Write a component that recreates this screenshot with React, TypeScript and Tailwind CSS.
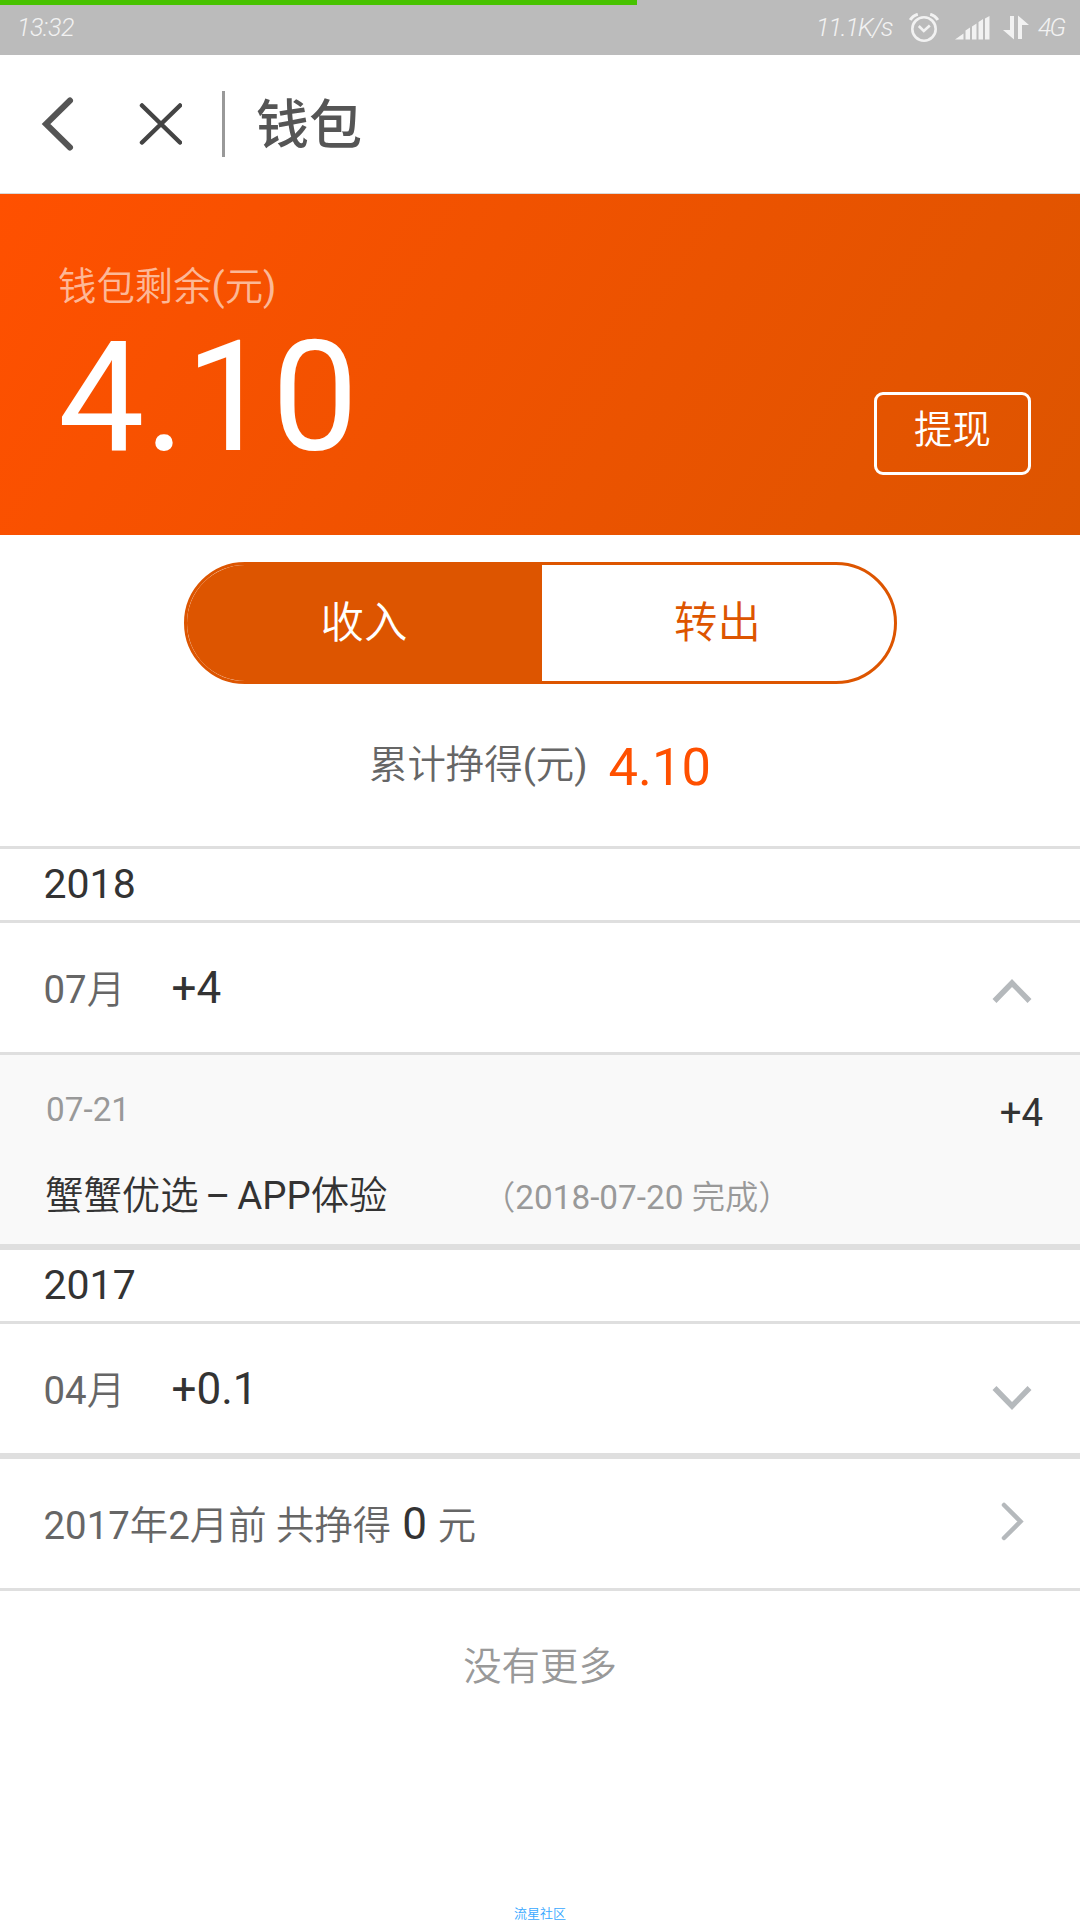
import type { ReactNode } from "react";

const months = {
  july: { label: "07月", amount: "+4" },
  april: { label: "04月", amount: "+0.1" },
} as const;

function StatusBar() {
  return (
    <div className="h-[55px] bg-[#bbbbbb]">
      <div className="h-[5px] w-[637px] bg-[#47c200]" />
      <div className="flex h-[45px] items-center justify-between px-[17px] text-[26px] font-light italic text-[#f2f2f2]">
        <span className="w-[58px] whitespace-nowrap text-[25px] tracking-[-0.4px]">13:32</span>
        <div className="flex items-center">
          <span className="mr-[17px] tracking-[-1.5px]">11.1K/s</span>
          <svg className="mr-[16px]" width="30" height="30" viewBox="0 0 30 30" fill="none" stroke="currentColor">
            <circle cx="15" cy="16" r="11.7" strokeWidth="2.6" />
            <path d="M9.8 13l5 5 6-5.5" strokeWidth="2.6" />
            <path d="M1.2 7Q4 2.5 8.8 1.3M28.8 7Q26 2.5 21.2 1.3" strokeWidth="3" />
          </svg>
          <svg className="mr-[13px]" width="35" height="25" viewBox="0 0 35 25" fill="currentColor">
            <path d="M0 24.5L8.5 18.5V24.5ZM10.5 15.5L15 12.5V24.5H10.5ZM17 11.5L21.5 8.5V24.5H17ZM23.5 7L28 4V24.5H23.5ZM30 3.5L34.5 1V24.5H30Z" />
          </svg>
          <svg className="mr-[9px]" width="26" height="25" viewBox="0 0 26 25" fill="currentColor">
            <path d="M7 1h4v23.5L0 15h7ZM15 24V.5L26 10h-7v14Z" />
          </svg>
          <span className="-mr-px text-[25px] tracking-[-2px]">4G</span>
        </div>
      </div>
    </div>
  );
}

function TitleBar() {
  return (
    <header className="flex h-[139px] items-center border-b border-[#d9d9d9] bg-white">
      <svg className="ml-[41px]" width="34" height="58" viewBox="0 0 34 58" fill="none" stroke="#555555" strokeWidth="6" strokeLinecap="round">
        <path d="M29 5.5L5 29L29 52.5" />
      </svg>
      <svg className="ml-[63px]" width="44" height="44" viewBox="0 0 44 44" fill="none" stroke="#444444" strokeWidth="4.5" strokeLinecap="round">
        <path d="M4 3.5L42 40.5M42 3.5L4 40.5" />
      </svg>
      <div className="ml-[40px] h-[66px] w-[3px] bg-[#999999]" />
      <h1 className="ml-[31px] pb-[6px] font-['Noto_Sans_CJK_SC',sans-serif] text-[53px] font-medium leading-[60px] text-[#555555]">
        钱包
      </h1>
    </header>
  );
}

function Balance() {
  return (
    <section className="flex h-[341px] justify-between bg-[linear-gradient(120deg,#ff5000_0%,#dd5500_100%)] pl-[58px] pr-[49px] text-white">
      <div className="pt-[70px]">
        <p className="text-[38.4px] leading-[46px] text-white/60">钱包剩余(元)</p>
        <p className="mt-[23px] text-[154px] leading-[130px]">4.10</p>
      </div>
      <button
        type="button"
        className="mt-[198px] flex h-[83px] w-[157px] items-center justify-center rounded-[9px] border-3 border-white pb-[7px] text-[38.4px]"
      >
        提现
      </button>
    </section>
  );
}

function Tabs() {
  return (
    <div className="mx-auto mt-[27px] flex h-[122px] w-[713px] overflow-hidden rounded-full border-3 border-[#dd5500] text-[43.4px]">
      <button type="button" className="w-[355px] bg-[#dd5500] pt-[2px] text-white">
        收入
      </button>
      <button type="button" className="flex-1 pt-[2px] text-[#dd5500]">
        转出
      </button>
    </div>
  );
}

function YearRow({ children }: { children: ReactNode }) {
  return (
    <h2 className="h-[74px] border-b-3 border-[#dfdfdf] pl-[43.5px] text-[41px] leading-[71px] text-[#333333]">
      {children}
    </h2>
  );
}

function MonthRow({ label, amount, open }: { label: string; amount: string; open?: boolean }) {
  return (
    <div className="flex h-[129px] justify-between pl-[43.5px] pr-[48px]">
      <p className="flex items-baseline text-[44px] leading-[131px] text-[#333333]">
        <span className="w-[128px] text-[38.4px] text-[#666666]">{label}</span>
        {amount}
      </p>
      <svg
        className={open ? "mt-[55px]" : "mt-[61px]"}
        width="40"
        height="26"
        viewBox="0 0 40 26"
        fill="none"
        stroke="#b5b9bc"
        strokeWidth="5.5"
      >
        <path d={open ? "M2.5 23L20 5L37.5 23" : "M2.5 3L20 21L37.5 3"} />
      </svg>
    </div>
  );
}

function Detail() {
  return (
    <div className="h-[192px] border-t-3 border-[#dfdfdf] bg-[#f9f9f9] pl-[45px] pr-[37px] text-[#333333]">
      <div className="flex justify-between pt-[30px]">
        <span className="pl-px text-[33.3px] leading-[50px] text-[#999999]">07-21</span>
        <span className="pt-[3px] text-[38.4px] leading-[50px]">+4</span>
      </div>
      <div className="mt-[33px] flex items-baseline leading-[50px]">
        <span className="w-[437px] text-[38.4px] [word-spacing:-2.8px]">蟹蟹优选 – APP体验</span>
        <span className="text-[33.3px] text-[#999999]">（2018-07-20 完成）</span>
      </div>
    </div>
  );
}

export default function App() {
  return (
    <div className="flex h-[1920px] w-[1080px] flex-col overflow-hidden bg-white font-[Roboto,'Noto_Sans_CJK_SC_DemiLight','Noto_Sans_CJK_SC_Light','Noto_Sans_CJK_SC',sans-serif]">
      <StatusBar />
      <TitleBar />
      <Balance />
      <Tabs />

      <div className="flex h-[162px] items-center justify-center gap-[21px]">
        <span className="text-[38.4px] text-[#666666]">累计挣得(元)</span>
        <span className="pt-[4px] text-[52.5px] text-[#ff5000]">4.10</span>
      </div>

      <main className="border-t-3 border-[#dfdfdf]">
        <YearRow>2018</YearRow>
        <MonthRow {...months.july} open />
        <Detail />
        <div className="border-t-6 border-[#dfdfdf]">
          <YearRow>2017</YearRow>
          <MonthRow {...months.april} />
        </div>
        <div className="flex h-[138px] justify-between border-b-3 border-t-6 border-[#dfdfdf] pl-[43.5px] pr-[56px]">
          <p className="text-[44px] leading-[131px] text-[#333333]">
            <span className="text-[38.4px] text-[#666666]">2017年2月前 共挣得</span> 0{" "}
            <span className="text-[38.4px] text-[#666666]">元</span>
          </p>
          <svg className="mt-[43px]" width="24" height="40" viewBox="0 0 24 40" fill="none" stroke="#b5b9bc" strokeWidth="4.5" strokeLinecap="round">
            <path d="M4 3L20.5 19.5L4 36" />
          </svg>
        </div>
      </main>

      <p className="mt-[51px] text-center text-[38.4px] leading-[50px] text-[#999999]">没有更多</p>
      <footer className="mt-auto text-center text-[13px] leading-[12px] text-[#38a8ff]">流星社区</footer>
    </div>
  );
}
